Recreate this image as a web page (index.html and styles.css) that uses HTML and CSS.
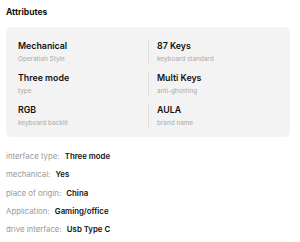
FILE: index.html
```html
<!DOCTYPE html>
<html lang="en">
<head>
    <meta charset="UTF-8">
    <meta name="viewport" content="width=device-width, initial-scale=1.0">
    <title>Attributes</title>
    <link rel="stylesheet" href="styles.css">
</head>
<body>

    <div class="attrs">
        <h3 class="attrs-title">Attributes</h3>

        <div class="attr-card">
            <div class="attr-item">
                <div class="attr-value">Mechanical</div>
                <div class="attr-name">Operation Style</div>
            </div>
            <div class="attr-item">
                <div class="attr-value">87 Keys</div>
                <div class="attr-name">keyboard standard</div>
            </div>
            <div class="attr-item">
                <div class="attr-value">Three mode</div>
                <div class="attr-name">type</div>
            </div>
            <div class="attr-item">
                <div class="attr-value">Multi Keys</div>
                <div class="attr-name">anti-ghosting</div>
            </div>
            <div class="attr-item">
                <div class="attr-value">RGB</div>
                <div class="attr-name">keyboard backlit</div>
            </div>
            <div class="attr-item">
                <div class="attr-value">AULA</div>
                <div class="attr-name">brand name</div>
            </div>
        </div>

        <ul class="spec-list">
            <li><span class="spec-label">interface type:</span> <b>Three mode</b></li>
            <li><span class="spec-label">mechanical:</span> <b>Yes</b></li>
            <li><span class="spec-label">place of origin:</span> <b>China</b></li>
            <li><span class="spec-label">Application:</span> <b>Gaming/office</b></li>
            <li><span class="spec-label">drive interface:</span> <b>Usb Type C</b></li>
        </ul>
    </div>

</body>
</html>
```

FILE: styles.css
```css
* {
    box-sizing: border-box;
    font-family: Inter, "Noto Sans", sans-serif;
}
body {
    margin: 0;
    background: white;
    color: #111;
}
.attrs {
    padding: 6px 10px 0 6px;
}
.attrs-title {
    margin: 0;
    font-size: 8.5px;
    font-weight: 700;
    line-height: 12px;
}
.attr-card {
    margin-top: 9px;
    background: #f3f3f3;
    border-radius: 5px;
    padding: 11.5px 0 9.5px 12px;
    display: grid;
    grid-template-columns: 131px 1fr;
    column-gap: 8px;
    row-gap: 7px;
}
.attr-item:nth-child(odd) {
    border-right: 1px solid #e0e0e0;
}
.attr-value {
    font-size: 8.8px;
    font-weight: 600;
    line-height: 13px;
}
.attr-name {
    font-size: 6.4px;
    color: #aaa;
    line-height: 10px;
    margin-top: 2px;
}
.spec-list {
    list-style: none;
    margin: 10px 0 0;
    padding: 0;
}
.spec-list li {
    font-size: 7.8px;
    line-height: 18.3px;
}
.spec-label {
    color: #999;
    margin-right: 3px;
}
.spec-list b {
    font-weight: 600;
    color: #111;
}
```
